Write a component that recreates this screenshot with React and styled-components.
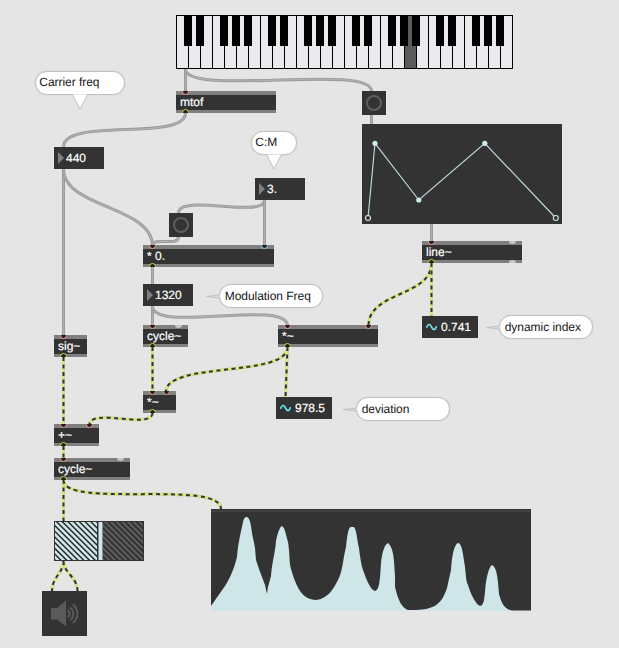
import React from "react";
import styled, { createGlobalStyle, css } from "styled-components";

const Global = createGlobalStyle`
  body { margin: 0; background: #e5e5e5; }
`;

const Patcher = styled.main`
  position: relative;
  width: 619px;
  height: 648px;
  overflow: hidden;
  background: #e5e5e5;
  font: 12px/14px "Liberation Sans", Arial, sans-serif;
  text-rendering: geometricPrecision;
  color: #161616;
`;

/* Nodes sit at free coordinates on the patch canvas. */
const placed = css`
  position: absolute;
  left: ${(p) => p.$x}px;
  top: ${(p) => p.$y}px;
`;

const WireLayer = styled.svg`
  position: absolute;
  inset: 0;
  fill: none;
`;

const ObjectBox = styled.div`
  ${placed}
  box-sizing: border-box;
  width: ${(p) => p.$w}px;
  height: 22px;
  padding: 0 4px;
  background: #333;
  border-top: 4px solid #808080;
  border-bottom: 3px solid #808080;
  color: #fff;
  -webkit-text-stroke: 0.2px #fff;
`;

const portColors = { hot: "#f5a08c", cold: "#8fd8ea", out: "#d3dc3c" };

const Port = styled.i`
  position: absolute;
  box-sizing: border-box;
  left: ${(p) => p.$at - 3.5}px;
  width: 7px;
  height: 7px;
  border: 1px solid ${(p) => portColors[p.$kind]};
  border-radius: 50%;
  background: #222;
  ${(p) =>
    p.$kind === "out"
      ? "bottom: -6px; clip-path: inset(0 0 3px 0);"
      : "top: -7px; clip-path: inset(3px 0 0 0);"}
`;

const IdlePort = styled.i`
  position: absolute;
  left: ${(p) => p.$at - 3.5}px;
  width: 7px;
  height: 3px;
  background: #c4c4c4;
  ${(p) =>
    p.$bottom
      ? "bottom: -3px; border-radius: 4px 4px 0 0;"
      : "top: -4px; border-radius: 0 0 4px 4px;"}
`;

const ValueBox = styled.div`
  ${placed}
  box-sizing: border-box;
  display: flex;
  align-items: center;
  gap: ${(p) => (p.$signal ? 4 : 2)}px;
  width: ${(p) => (p.$signal ? 56 : 50)}px;
  height: 22px;
  padding: 0 4px;
  background: #333;
  color: #fff;
  -webkit-text-stroke: 0.2px #fff;
`;

const Arrow = styled.i`
  border: 6px solid transparent;
  border-left-color: #808080;
  border-right: 0;
`;

const BangBox = styled.div`
  ${placed}
  display: grid;
  place-items: center;
  width: 24px;
  height: 24px;
  background: #333;
  &::after {
    content: "";
    box-sizing: border-box;
    width: 16px;
    height: 16px;
    border: 2px solid #5e5e5e;
    border-radius: 50%;
  }
`;

const Bubble = styled.div`
  ${placed}
  box-sizing: border-box;
  width: ${(p) => p.$w}px;
  height: 24px;
  padding: ${(p) => (p.$side === "down" ? "3px 0 0 3.3px" : "4px 0 0 4.7px")};
  border: 1px solid #c2c2c2;
  border-radius: 12px;
  background: #fff;
  letter-spacing: -0.04px;
  white-space: nowrap;
  box-shadow: 0 0 1px #bbb;
`;

const Tail = styled.svg`
  position: absolute;
  overflow: visible;
  stroke: #c2c2c2;
  ${(p) =>
    p.$side === "down"
      ? `left: ${p.$at}px; top: 21px; fill: #fff;`
      : "left: -15px; top: 8px; fill: #dcdcdc;"}
`;

const Keyboard = styled.div`
  ${placed}
  box-sizing: border-box;
  display: flex;
  width: 337px;
  height: 54px;
  border: 1px solid #000;
  border-right: 0;
  background: #ebeaef;
`;

const WhiteKey = styled.div`
  position: relative;
  box-sizing: border-box;
  width: 12px;
  height: 52px;
  border-right: 1px solid #000;
  background: ${(p) => (p.$held ? "#5a5a5a" : "#ebeaef")};
`;

const BlackKey = styled.div`
  position: absolute;
  z-index: 1;
  left: 7px;
  top: 0;
  width: 8px;
  height: 30px;
  background: #000;
`;

const Panel = styled.div`
  ${placed}
  width: ${(p) => p.$w}px;
  height: ${(p) => p.$h}px;
  background: #333;
  svg { display: block; }
`;

const wires = [
  "M185.5 69V92",
  "M185.5 69C185.5 97 371.5 63 371.5 91",
  "M185.5 113C185.5 142 63.5 117 63.5 147",
  "M63.5 169V336",
  "M63.5 169C63.5 208 152.5 206 152.5 246",
  "M178.5 237C178.5 247 152.5 236 152.5 246",
  "M264.5 200C264.5 219 178.5 193 178.5 213",
  "M264.5 200V246",
  "M152.5 267V284",
  "M152.5 306V326",
  "M152.5 306C152.5 334 287.5 298 287.5 326",
  "M371.5 115V124",
  "M431.5 224V242",
];

const signals = [
  "M431.5 263C431.5 297 368.5 291 368.5 326",
  "M431.5 263V316",
  "M152.5 347V392",
  "M287.5 347C287.5 378 166 361 166 392",
  "M287.5 347L285.5 397",
  "M152.5 413C152.5 430 89.5 407 89.5 425",
  "M63.5 357V425",
  "M63.5 446V459",
  "M63.5 480V521",
  "M63.5 480C63.5 509 221 479 221 509",
  "M63.5 561C63.5 573 52 577 52 591",
  "M63.5 561C63.5 573 77.5 577 77.5 591",
];

const objects = [
  { x: 176, y: 91, w: 100, text: "mtof", ins: [["hot", 9.5]] },
  { x: 143, y: 245, w: 131, text: "* 0.", ins: [["hot", 9.5], ["cold", 121.5]] },
  { x: 422, y: 241, w: 100, text: "line~", ins: [["hot", 9.5]], idle: 90.5, idleOut: 90.5 },
  { x: 54, y: 335, w: 33, text: "sig~", ins: [["hot", 9.5]] },
  { x: 143, y: 325, w: 45, text: "cycle~", ins: [["hot", 9.5]], idle: 35.5 },
  { x: 278, y: 325, w: 100, text: "*~", ins: [["hot", 9.5], ["hot", 90.5]] },
  { x: 143, y: 391, w: 33, text: "*~", ins: [["hot", 9.5], ["hot", 23.5]] },
  { x: 54, y: 424, w: 45, text: "+~", ins: [["hot", 9.5], ["hot", 35.5]] },
  { x: 54, y: 458, w: 76, text: "cycle~", ins: [["hot", 9.5]], idle: 66.5 },
];

const comments = [
  { x: 35, y: 71, w: 90, text: "Carrier freq", tail: "down", at: 36 },
  { x: 251, y: 131, w: 46, text: "C:M", tail: "down", at: 14 },
  { x: 219, y: 284, w: 104, text: "Modulation Freq", tail: "left" },
  { x: 499, y: 315, w: 94, text: "dynamic index", tail: "left" },
  { x: 356, y: 397, w: 94, text: "deviation", tail: "left" },
];

const sharps = [0, 1, 3, 4, 5];
const keys = Array.from({ length: 28 }, (_, i) => i);
const hatchLines = Array.from({ length: 23 }, (_, i) => `M${-38 + i * 5.7} 0l40 40`).join("");

function MaxObject({ x, y, w, text, ins, idle, idleOut }) {
  return (
    <ObjectBox $x={x} $y={y} $w={w}>
      {text}
      {ins.map(([kind, at]) => <Port key={at} $kind={kind} $at={at} />)}
      <Port $kind="out" $at={9.5} />
      {idle && <IdlePort $at={idle} />}
      {idleOut && <IdlePort $at={idleOut} $bottom />}
    </ObjectBox>
  );
}

function Comment({ x, y, w, text, tail, at }) {
  return (
    <Bubble $x={x} $y={y} $w={w} $side={tail}>
      {tail === "down" ? (
        <Tail $side="down" $at={at} width="16" height="17">
          <path d="M.5 1.500L8 16L15.500 1.500" />
        </Tail>
      ) : (
        <Tail $side="left" width="16" height="8">
          <path d="M14.500 2L1 3.500L14.500 5" />
        </Tail>
      )}
      {text}
    </Bubble>
  );
}

function SignalValue({ x, y, children }) {
  return (
    <ValueBox $x={x} $y={y} $signal>
      <svg width="11" height="10" fill="none" stroke="#6ddde8" strokeWidth="1.7">
        <path d="M.6 5.800C1.700 1.500 3.700 1.500 5.500 5S9.300 8.500 10.400 4.200" />
      </svg>
      {children}
    </ValueBox>
  );
}

export default function App() {
  return (
    <Patcher>
      <Global />
      <WireLayer width="619" height="648">
        {wires.map((d) => (
          <g key={d}>
            <path d={d} stroke="#999" strokeWidth="3" />
            <path d={d} stroke="#b0b0b0" strokeWidth="1.300" />
          </g>
        ))}
        {signals.map((d) => (
          <g key={d}>
            <path d={d} stroke="#bfc6a6" strokeWidth="3" />
            <path d={d} stroke="#d5f56c" strokeWidth="2" />
            <path d={d} stroke="#333" strokeWidth="2" strokeDasharray="4 3.500" />
          </g>
        ))}
      </WireLayer>

      <Keyboard $x={176} $y={15}>
        {keys.map((k) => (
          <WhiteKey key={k} $held={k === 19}>
            {sharps.includes(k % 7) && <BlackKey />}
          </WhiteKey>
        ))}
      </Keyboard>

      {objects.map((o) => <MaxObject key={`${o.x}-${o.y}`} {...o} />)}
      {comments.map((c) => <Comment key={c.text} {...c} />)}

      <ValueBox $x={54} $y={147}><Arrow />440</ValueBox>
      <ValueBox $x={255} $y={178}><Arrow />3.</ValueBox>
      <ValueBox $x={143} $y={284}><Arrow />1320</ValueBox>
      <SignalValue x={422} y={316}>0.741</SignalValue>
      <SignalValue x={276} y={397}>978.5</SignalValue>
      <BangBox $x={362} $y={91} />
      <BangBox $x={169} $y={213} />

      <Panel $x={362} $y={124} $w={200} $h={100}>
        <svg width="200" height="100" stroke="#bcd8da" fill="#d0e9ec">
          <path d="M6 94L13 19.300L56.800 76L122.800 19.300L193.800 94" fill="none" strokeWidth="1.200" />
          <g stroke="none">
            <circle cx="13" cy="19.300" r="2.600" />
            <circle cx="56.800" cy="76" r="2.600" />
            <circle cx="122.800" cy="19.300" r="2.600" />
          </g>
          <g fill="#333" stroke="#d0e9ec" strokeWidth="1.100">
            <circle cx="6" cy="94" r="2.500" />
            <circle cx="193.800" cy="94" r="2.500" />
          </g>
        </svg>
      </Panel>

      <Panel $x={54} $y={521} $w={90} $h={40}>
        <svg width="90" height="40">
          <clipPath id="bars">
            <path d="M1 1H43V39H1ZM49 1H89V39H49Z" />
          </clipPath>
          <path d="M1 1H43V39H1Z" fill="#cee7ea" />
          <path d="M49 1H89V39H49Z" fill="#5a5a5a" />
          <path d={hatchLines} stroke="#2b2b2b" strokeWidth="1.500" clipPath="url(#bars)" />
          <path d="M44.500 1H48.500V39H44.500Z" fill="#cee7ea" />
        </svg>
      </Panel>

      <Panel $x={42} $y={591} $w={45} $h={45}>
        <svg width="45" height="45" fill="none" stroke="#5a5a5a" strokeWidth="2">
          <path d="M9 17H15L24 9.500V35.500L15 28.500H9Z" fill="#5a5a5a" stroke="none" />
          <path d="M25.500 19.500A3.500 3.500 0 0 1 25.500 26M28 16.500A7.500 7.500 0 0 1 28 29M31 13.500A12 12 0 0 1 31 32" />
        </svg>
      </Panel>

      <Panel $x={211} $y={509} $w={320} $h={102}>
        <svg width="320" height="102">
          <path d="M0 2H320" stroke="#505050" />
          <path
            fill="#cfe6e8"
            d="M0 97L14 77C19 69 23 60 26 48C27 34 30 23 32 13C33 9 34 8 36 8C38 9 39 11 40 17C41 26 43 33 44 39L45 51L48 60L54 76L56 85L57 78L60 67C61 53 64 45 65 32C67 22 69 18 71 17C74 19 75 26 77 33C79 45 78 53 80 60C85 77 91 91 105 91C117 90 123 79 127 71C132 61 132 49 135 38C136 29 137 18 140 18H143C146 22 146 32 148 39C149 48 150 53 151 58C156 73 160 81 164 82C169 81 169 68 170 54C171 43 174 35 177 34C183 39 183 52 184 67V78C188 94 191 98 197 101H205C222 100 230 97 236 79L240 61C241 46 243 36 247 34C251 34 252 45 254 58C255 67 255 72 257 76C261 89 266 96 269 97C273 96 273 91 274 83C275 68 278 58 281 56C286 58 287 71 288 85C291 96 294 100 301 101.500H320V102H0Z"
          />
        </svg>
      </Panel>
    </Patcher>
  );
}
